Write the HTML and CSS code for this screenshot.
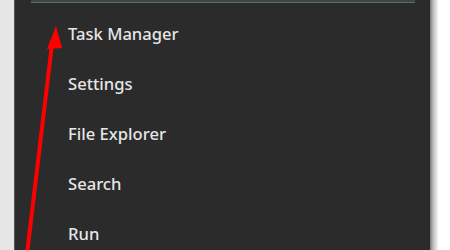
FILE: index.html
```html
<!DOCTYPE html>
<html>
<head>
<meta charset="utf-8">
<link rel="stylesheet" href="styles.css">
</head>
<body>
<div class="screen">
  <div class="desk"></div>
  <div class="menu">
    <div class="hovered"></div>
    <ul class="items">
      <li class="item">Task Manager</li>
      <li class="item">Settings</li>
      <li class="item">File Explorer</li>
      <li class="item">Search</li>
      <li class="item">Run</li>
    </ul>
  </div>
  <div class="shadow"></div>
  <div class="rest"></div>
  <svg class="arrow" width="450" height="250" viewBox="0 0 450 250">
    <line x1="27" y1="254" x2="52" y2="44" stroke="#ff0000" stroke-width="4"/>
    <polygon points="56,26 47,49 62,48" fill="#ff0000"/>
  </svg>
</div>
</body>
</html>
```
FILE: styles.css
```css
html, body {
  margin: 0;
  padding: 0;
  background: #ffffff;
}
.screen {
  position: relative;
  display: flex;
  width: 450px;
  height: 250px;
  overflow: hidden;
}
.desk {
  width: 14px;
  background: #e6e6e6;
}
.menu {
  width: 416px;
  background: #2b2b2b;
  border-left: 1px solid #555555;
  box-sizing: border-box;
}
.hovered {
  height: 2px;
  margin: 0 15px 0 16px;
  background: #3c4848;
  border-bottom: 1px solid #646868;
}
.items {
  list-style: none;
  margin: 0;
  padding: 5px 0 0 0;
}
.item {
  height: 50px;
  display: flex;
  align-items: center;
  padding-left: 53px;
  font-family: "Noto Sans", sans-serif;
  font-size: 16.6px;
  font-weight: 500;
  color: #e6e6e6;
}
.shadow {
  width: 8px;
  background: linear-gradient(to right, #7a7a7a, #bdbdbd 40%, #f4f4f4);
}
.rest {
  flex: 1;
  background: #ffffff;
}
.arrow {
  position: absolute;
  left: 0;
  top: 0;
}
```
